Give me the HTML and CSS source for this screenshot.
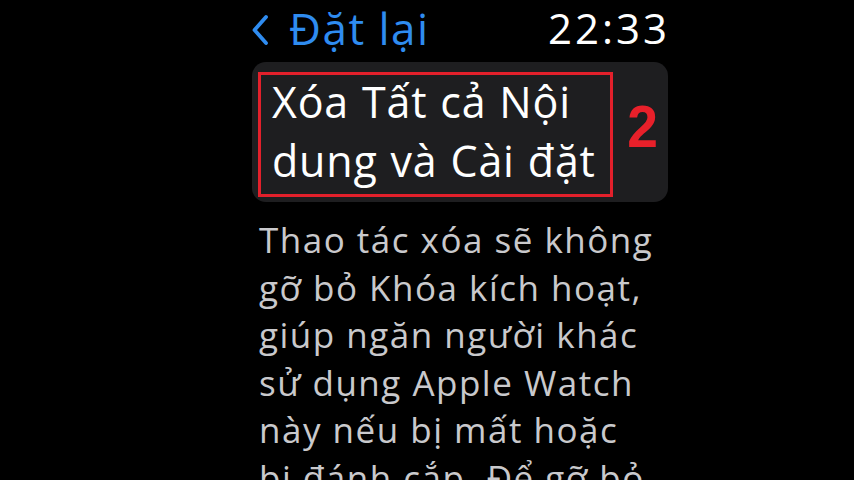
FILE: index.html
```html
<!DOCTYPE html>
<html lang="vi">
<head>
<meta charset="utf-8">
<link rel="stylesheet" href="styles.css">
</head>
<body>
<div class="screen">
  <header class="topbar">
    <div class="back">
      <svg class="chevron" width="18" height="32" viewBox="0 0 18 32"><path d="M15 3 L3.5 16 L15 29" fill="none" stroke="#2f8cf0" stroke-width="3.8" stroke-linecap="round" stroke-linejoin="round"/></svg>
      <span class="back-label">Đặt lại</span>
    </div>
    <div class="time">22:33</div>
  </header>
  <div class="card">
    <div class="highlight">
      <div class="card-title">Xóa Tất cả Nội<br>dung và Cài đặt</div>
    </div>
    <div class="step">2</div>
  </div>
  <p class="desc">Thao tác xóa sẽ không<br>gỡ bỏ Khóa kích hoạt,<br>giúp ngăn người khác<br>sử dụng Apple Watch<br>này nếu bị mất hoặc<br>bị đánh cắp. Để gỡ bỏ</p>
</div>
</body>
</html>
```
FILE: styles.css
```css
html, body {
  margin: 0;
  padding: 0;
  background: #000;
  height: 480px;
  overflow: hidden;
}
.screen {
  margin-left: 250px;
  width: 418px;
  font-family: "Open Sans", "Noto Sans", sans-serif;
}
.topbar {
  display: flex;
  justify-content: space-between;
  align-items: flex-start;
  height: 62px;
}
.back {
  display: flex;
  align-items: center;
  gap: 20px;
  height: 56px;
  padding-left: 1px;
}
.chevron {
  margin-top: 4px;
}
.back-label {
  color: #2f8cf0;
  font-size: 44px;
  line-height: 56px;
  font-weight: 500;
  letter-spacing: 1.5px;
}
.time {
  color: #fff;
  font-size: 42px;
  line-height: 56px;
  font-weight: 500;
  letter-spacing: 3px;
  margin-right: -2px;
}
.card {
  background: #1e1e20;
  border-radius: 14px;
  height: 140px;
  margin-left: 2px;
  display: flex;
  align-items: flex-start;
  padding: 10px 0 0 6px;
  box-sizing: border-box;
}
.highlight {
  border: 3px solid #e3202b;
  width: 355px;
  height: 125px;
  box-sizing: border-box;
  padding: 0 0 0 11px;
}
.card-title {
  color: #fff;
  font-size: 43px;
  line-height: 59px;
  letter-spacing: 0.8px;
  word-spacing: 1px;
  margin-top: -3px;
  white-space: nowrap;
}
.step {
  color: #e8202a;
  font-family: "Liberation Sans", Arial, sans-serif;
  font-size: 60px;
  line-height: 60px;
  font-weight: 700;
  margin: 25px 0 0 13px;
  transform: scaleX(0.92);
}
.desc {
  margin: 14px 0 0 9px;
  color: #c9c9cc;
  font-size: 35px;
  line-height: 47.5px;
  letter-spacing: 1.5px;
  white-space: nowrap;
}
```
